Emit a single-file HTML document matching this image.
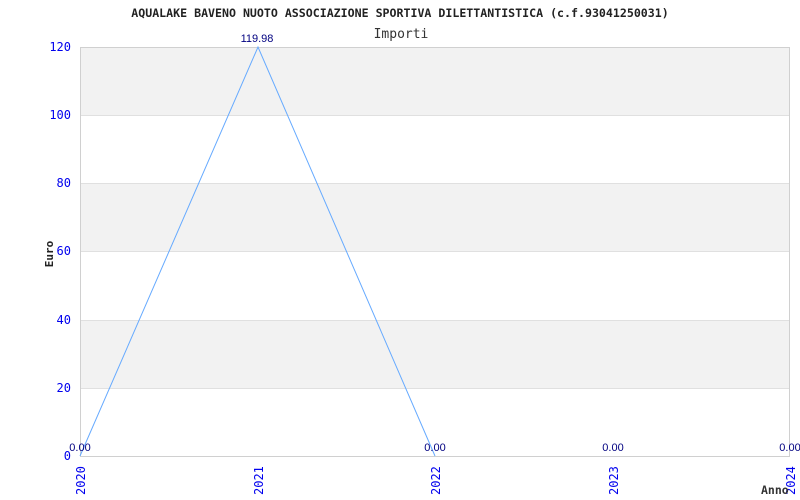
<!DOCTYPE html>
<html><head><meta charset="utf-8"><style>html,body{margin:0;padding:0;background:#fff}svg{display:block}</style></head>
<body>
<svg width="800" height="500" xmlns="http://www.w3.org/2000/svg">
<rect width="800" height="500" fill="#fff"/>
<text x="400" y="17" text-anchor="middle" font-family="DejaVu Sans Mono, monospace" font-weight="bold" font-size="11.6" fill="#222">AQUALAKE BAVENO NUOTO ASSOCIAZIONE SPORTIVA DILETTANTISTICA (c.f.93041250031)</text>
<text x="401" y="38" text-anchor="middle" font-family="DejaVu Sans Mono, monospace" font-size="13" fill="#333">Importi</text>
<rect x="80" y="47" width="710" height="68" fill="#f2f2f2"/>
<rect x="80" y="183" width="710" height="68" fill="#f2f2f2"/>
<rect x="80" y="320" width="710" height="68" fill="#f2f2f2"/>
<g stroke="#e0e0e0" stroke-width="1">
<line x1="80" y1="115.5" x2="790" y2="115.5"/>
<line x1="80" y1="183.5" x2="790" y2="183.5"/>
<line x1="80" y1="251.5" x2="790" y2="251.5"/>
<line x1="80" y1="320.5" x2="790" y2="320.5"/>
<line x1="80" y1="388.5" x2="790" y2="388.5"/>
</g>
<g stroke="#d0d0d0" stroke-width="1" fill="none">
<line x1="80.5" y1="47" x2="80.5" y2="456"/>
<line x1="789.5" y1="47" x2="789.5" y2="456"/>
<line x1="80" y1="47.5" x2="790" y2="47.5"/>
<line x1="80" y1="456.5" x2="790" y2="456.5"/>
</g>
<g font-family="DejaVu Sans Mono, monospace" font-size="12" fill="#0000ee" text-anchor="end">
<text x="71" y="51">120</text>
<text x="71" y="119">100</text>
<text x="71" y="187">80</text>
<text x="71" y="255">60</text>
<text x="71" y="324">40</text>
<text x="71" y="392">20</text>
<text x="71" y="460">0</text>
</g>
<text transform="translate(53,254) rotate(-90)" text-anchor="middle" font-family="DejaVu Sans Mono, monospace" font-weight="bold" font-size="11" fill="#222">Euro</text>
<g font-family="DejaVu Sans Mono, monospace" font-size="12" fill="#0000ee">
<text transform="translate(85,495) rotate(-90)">2020</text>
<text transform="translate(263,495) rotate(-90)">2021</text>
<text transform="translate(440,495) rotate(-90)">2022</text>
<text transform="translate(618,495) rotate(-90)">2023</text>
<text transform="translate(795,495) rotate(-90)">2024</text>
</g>
<text x="761" y="494" font-family="DejaVu Sans Mono, monospace" font-weight="bold" font-size="11.5" fill="#333">Anno</text>
<polyline points="80,456 258,47 435,456" fill="none" stroke="#66aaff" stroke-width="1"/>
<g font-family="Liberation Sans, sans-serif" font-size="11" fill="#000080" text-anchor="middle">
<text x="257" y="42">119.98</text>
<text x="80" y="451">0.00</text>
<text x="435" y="451">0.00</text>
<text x="613" y="451">0.00</text>
<text x="790" y="451">0.00</text>
</g>
</svg>
</body></html>
